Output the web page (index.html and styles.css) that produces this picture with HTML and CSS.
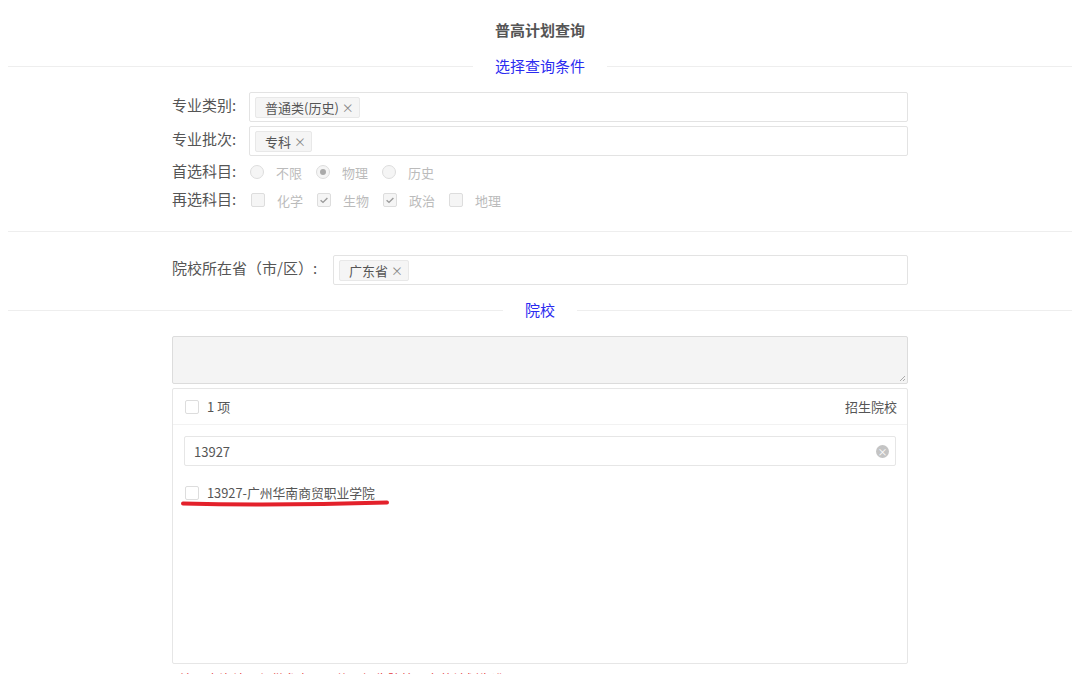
FILE: index.html
```html
<!DOCTYPE html>
<html lang="zh-CN">
<head>
<meta charset="utf-8">
<title>普高计划查询</title>
<link rel="stylesheet" href="styles.css">
</head>
<body>
<div class="page">
  <h1 class="title">普高计划查询</h1>
  <div class="divider"><span class="line"></span><span class="dtext">选择查询条件</span><span class="line"></span></div>

  <div class="form">
    <div class="row">
      <label class="lbl">专业类别:</label>
      <div class="box"><span class="tag">普通类(历史)<i class="x">×</i></span></div>
    </div>
    <div class="row r2">
      <label class="lbl">专业批次:</label>
      <div class="box"><span class="tag">专科<i class="x">×</i></span></div>
    </div>
    <div class="row opt">
      <label class="lbl">首选科目:</label>
      <div class="choices">
        <span class="ch"><span class="radio"></span><span class="ct">不限</span></span>
        <span class="ch"><span class="radio on"></span><span class="ct">物理</span></span>
        <span class="ch"><span class="radio"></span><span class="ct">历史</span></span>
      </div>
    </div>
    <div class="row opt">
      <label class="lbl">再选科目:</label>
      <div class="choices cbs">
        <span class="ch"><span class="cb"></span><span class="ct">化学</span></span>
        <span class="ch"><span class="cb on"><svg viewBox="0 0 14 14" width="14" height="14"><path d="M3.6 7.2 L6 9.4 L10.4 5" fill="none" stroke="#9a9a9a" stroke-width="1.4"/></svg></span><span class="ct">生物</span></span>
        <span class="ch"><span class="cb on"><svg viewBox="0 0 14 14" width="14" height="14"><path d="M3.6 7.2 L6 9.4 L10.4 5" fill="none" stroke="#9a9a9a" stroke-width="1.4"/></svg></span><span class="ct">政治</span></span>
        <span class="ch"><span class="cb"></span><span class="ct">地理</span></span>
      </div>
    </div>
  </div>

  <div class="hr"></div>

  <div class="form">
    <div class="row prov">
      <label class="lbl wide">院校所在省（市/区）:</label>
      <div class="box"><span class="tag">广东省<i class="x">×</i></span></div>
    </div>
  </div>

  <div class="divider d2"><span class="line"></span><span class="dtext">院校</span><span class="line"></span></div>

  <div class="form">
    <div class="textarea"><svg class="grip" viewBox="0 0 8 8" width="8" height="8"><path d="M7 2 L2 7 M7 5 L5 7" stroke="#999" stroke-width="0.8"/></svg></div>
    <div class="panel">
      <div class="phead">
        <span class="cb plain"></span><span class="count">1 项</span>
        <span class="ptitle">招生院校</span>
      </div>
      <div class="pbody">
        <div class="search"><span class="sval">13927</span><span class="clear">×</span></div>
        <div class="item"><span class="cb plain"></span><span class="itext">13927-广州华南商贸职业学院</span></div>
      </div>
      <svg class="mark" viewBox="0 0 210 10" width="210" height="10"><path d="M2 5.5 C 60 7, 140 6.5, 206 4.5" fill="none" stroke="#e3212b" stroke-width="4" stroke-linecap="round"/></svg>
    </div>
    <p class="note">注：查询结果仅供参考，具体以招生院校公布的计划为准。</p>
  </div>
</div>
</body>
</html>
```

FILE: styles.css
```css
* { box-sizing: border-box; }
html, body { margin: 0; padding: 0; background: #fff; }
body {
  font-family: "Noto Sans CJK SC", "Noto Sans", "Liberation Sans", sans-serif;
  color: #555;
  overflow: hidden;
}
.page { padding: 0 8px; }
.title {
  margin: 0;
  padding-top: 19px;
  height: 42px;
  line-height: 22px;
  font-size: 15px;
  font-weight: bold;
  text-align: center;
  color: #555;
}
.divider {
  display: flex;
  align-items: center;
  height: 22px;
  margin-top: 13px;
}
.divider .line { flex: 1; height: 1px; background: #eee; }
.divider .dtext {
  padding: 0 22px;
  font-size: 15px;
  line-height: 22px;
  color: #2b2bf0;
}
.d2 { margin-top: 14px; }
.form { width: 736px; margin: 0 auto; }
.row { display: flex; align-items: center; }
.row:first-child { margin-top: 15px; }
.r2 { margin-top: 4px; }
.lbl {
  width: 77px;
  flex: none;
  font-size: 15px;
  line-height: 22px;
  color: #555;
  white-space: nowrap;
  position: relative;
  top: -2px;
}
.lbl.wide { width: 161px; }
.box {
  flex: 1;
  height: 30px;
  border: 1px solid #e3e3e3;
  border-radius: 2px;
  display: flex;
  align-items: center;
  padding-left: 5px;
}
.tag {
  display: inline-flex;
  align-items: center;
  height: 21px;
  padding: 0 5px 0 9px;
  background: #f5f5f5;
  border: 1px solid #e8e8e8;
  border-radius: 2px;
  font-size: 13px;
  color: #555;
}
.tag .x { font-style: normal; margin-left: 3px; color: #888; font-size: 12px; }
.opt { height: 28px; }
.row.opt:nth-child(3) { margin-top: 2px; }
.opt .lbl { top: -1px; }
.choices { display: flex; align-items: center; padding-left: 1px; }
.ch { display: inline-flex; align-items: center; margin-right: 14px; }
.ct { font-size: 13px; color: #bbb; margin-left: 12px; }
.radio {
  width: 14px; height: 14px;
  border: 1px solid #ddd;
  border-radius: 50%;
  background: #f5f5f5;
  position: relative;
}
.radio.on::after {
  content: "";
  position: absolute;
  left: 3px; top: 3px;
  width: 6px; height: 6px;
  border-radius: 50%;
  background: #aaa;
}
.cbs { padding-left: 2px; }
.cb {
  width: 14px; height: 14px;
  border: 1px solid #ddd;
  border-radius: 2px;
  background: #f5f5f5;
  display: inline-flex;
  flex: none;
}
.cb svg { margin: -1px; }
.hr { height: 1px; background: #eee; margin-top: 17px; }
.row.prov { margin-top: 23px; }
.prov .box { height: 30px; }
.textarea {
  margin-top: 15px;
  height: 48px;
  background: #f4f4f4;
  border: 1px solid #dcdcdc;
  border-radius: 2px;
  position: relative;
}
.grip { position: absolute; right: 1px; bottom: 1px; }
.panel {
  margin-top: 4px;
  height: 276px;
  border: 1px solid #e6e6e6;
  border-radius: 2px;
  position: relative;
}
.phead {
  height: 36px;
  display: flex;
  align-items: center;
  padding: 0 10px 0 12px;
  border-bottom: 1px solid #f2f2f2;
}
.cb.plain { background: #fff; border-color: #ddd; }
.count { margin-left: 8px; font-size: 13px; color: #555; }
.ptitle { margin-left: auto; font-size: 13px; color: #555; }
.pbody { padding: 11px 11px 0 11px; }
.search {
  height: 30px;
  border: 1px solid #e6e6e6;
  border-radius: 2px;
  display: flex;
  align-items: center;
  padding: 0 6px 0 9px;
}
.sval { font-size: 13px; color: #555; }
.clear {
  margin-left: auto;
  width: 13px; height: 13px;
  border-radius: 50%;
  background: #c4c4c4;
  color: #fff;
  font-size: 10px;
  line-height: 13px;
  text-align: center;
}
.item {
  margin-top: 17px;
  display: flex;
  align-items: center;
  padding-left: 1px;
}
.itext { margin-left: 8px; font-size: 12.8px; color: #555; }
.mark { position: absolute; left: 8px; top: 109px; }
.note {
  margin: 6px 0 0 8px;
  font-size: 13px;
  line-height: 18px;
  color: #e4393c;
}
```
